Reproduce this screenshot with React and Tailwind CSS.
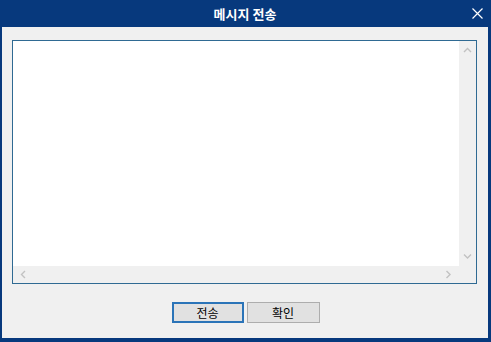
import React from 'react';

const font = { fontFamily: '"Noto Sans CJK KR", "Noto Sans", sans-serif' };

function Chevron({ dir }) {
  const paths = {
    up: 'M1 5 L4.5 1.5 L8 5',
    down: 'M1 1.5 L4.5 5 L8 1.5',
    left: 'M5 1 L1.5 4.5 L5 8',
    right: 'M1.5 1 L5 4.5 L1.5 8',
  };
  const vertical = dir === 'up' || dir === 'down';
  return (
    <svg width={vertical ? 9 : 7} height={vertical ? 7 : 9} viewBox={vertical ? '0 0 9 7' : '0 0 7 9'}>
      <path d={paths[dir]} fill="none" stroke="#c2c2c2" strokeWidth="1.4" />
    </svg>
  );
}

export default function App() {
  return (
    <div className="w-[491px] h-[342px] bg-[#07397d] flex flex-col pl-[2px] pr-[3px] pb-[4px]" style={font}>
      <div className="relative h-[27px] flex items-center justify-center text-white text-[13px] font-bold">
        메시지 전송
        <svg className="absolute right-[5px] top-[8px]" width="11" height="11" viewBox="0 0 11 11">
          <path d="M0.5 0.5 L10.5 10.5 M10.5 0.5 L0.5 10.5" stroke="#ffffff" strokeWidth="1.2" />
        </svg>
      </div>
      <div className="flex-1 bg-[#f0f0f0] pt-[13px] pl-[10px] flex flex-col">
        <div className="w-[465px] h-[244px] border border-[#2f6a93] flex flex-col">
          <div className="flex flex-1">
            <div className="flex-1 bg-white" />
            <div className="w-[17px] bg-[#f0f0f0] flex flex-col items-center justify-between py-[6px]">
              <Chevron dir="up" />
              <Chevron dir="down" />
            </div>
          </div>
          <div className="h-[17px] flex">
            <div className="flex-1 bg-[#f0f0f0] flex items-center justify-between px-[7px]">
              <Chevron dir="left" />
              <Chevron dir="right" />
            </div>
            <div className="w-[17px] bg-[#f0f0f0]" />
          </div>
        </div>
        <div className="flex justify-center gap-[3px] mt-[18px] pr-[9px]">
          <button className="w-[72px] h-[21px] bg-[#e1e1e1] border-2 border-[#2b74b8] text-[12px] text-black leading-none flex items-center justify-center">
            전송
          </button>
          <button className="w-[73px] h-[21px] bg-[#e1e1e1] border border-[#adadad] text-[12px] text-black leading-none flex items-center justify-center">
            확인
          </button>
        </div>
      </div>
    </div>
  );
}
